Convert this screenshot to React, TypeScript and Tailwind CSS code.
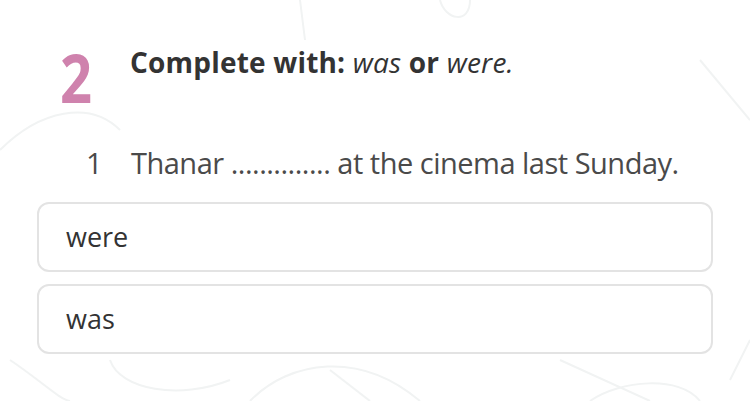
const OPTIONS = ["were", "was"];

function Doodles() {
  return (
    <svg
      className="pointer-events-none absolute inset-0 h-full w-full"
      viewBox="0 0 750 401"
      fill="none"
      stroke="#f1f3f3"
      strokeWidth="2"
    >
      <path d="M0 150 C 40 110, 90 100, 120 130" />
      <path d="M300 0 L 305 40" />
      <path d="M440 0 C 445 20, 470 25, 470 0" />
      <path d="M700 60 L 750 120" />
      <path d="M10 360 C 40 380, 60 400, 70 401" />
      <path d="M110 360 C 120 390, 180 400, 230 380" />
      <path d="M250 401 C 290 360, 360 350, 420 401" />
      <path d="M330 370 L 370 401" />
      <path d="M560 360 L 650 401" />
      <path d="M590 401 C 620 380, 680 375, 700 401" />
      <path d="M730 380 L 750 340" />
    </svg>
  );
}

export default function App() {
  return (
    <div className="relative h-[401px] w-[750px] overflow-hidden bg-white font-['Open_Sans',sans-serif]">
      <Doodles />
      <div className="relative pt-[44px]">
        <div className="flex items-start pl-[60px]">
          <span className="w-[70px] origin-left text-[66px] font-bold leading-none text-[#cf82ad] [transform:scaleX(0.85)]">
            2
          </span>
          <h2 className="mt-[4px] text-[28px] font-bold leading-none tracking-[0.2px] text-[#333]">
            Complete with: <span className="font-normal italic">was</span> or{" "}
            <span className="font-normal italic">were.</span>
          </h2>
        </div>
        <p className="mt-[38px] flex pl-[86px] text-[29px] leading-none tracking-[-0.5px] text-[#4a4a4a]">
          <span className="w-[45px]">1</span>
          <span>Thanar .............. at the cinema last Sunday.</span>
        </p>
        <div className="mt-[25px] flex flex-col gap-[12px] px-[37px]">
          {OPTIONS.map((option) => (
            <button
              key={option}
              type="button"
              className="flex h-[70px] items-center rounded-[12px] border-2 border-[#e3e3e3] bg-white pl-[27px] text-left text-[27px] text-[#333]"
            >
              {option}
            </button>
          ))}
        </div>
      </div>
    </div>
  );
}
